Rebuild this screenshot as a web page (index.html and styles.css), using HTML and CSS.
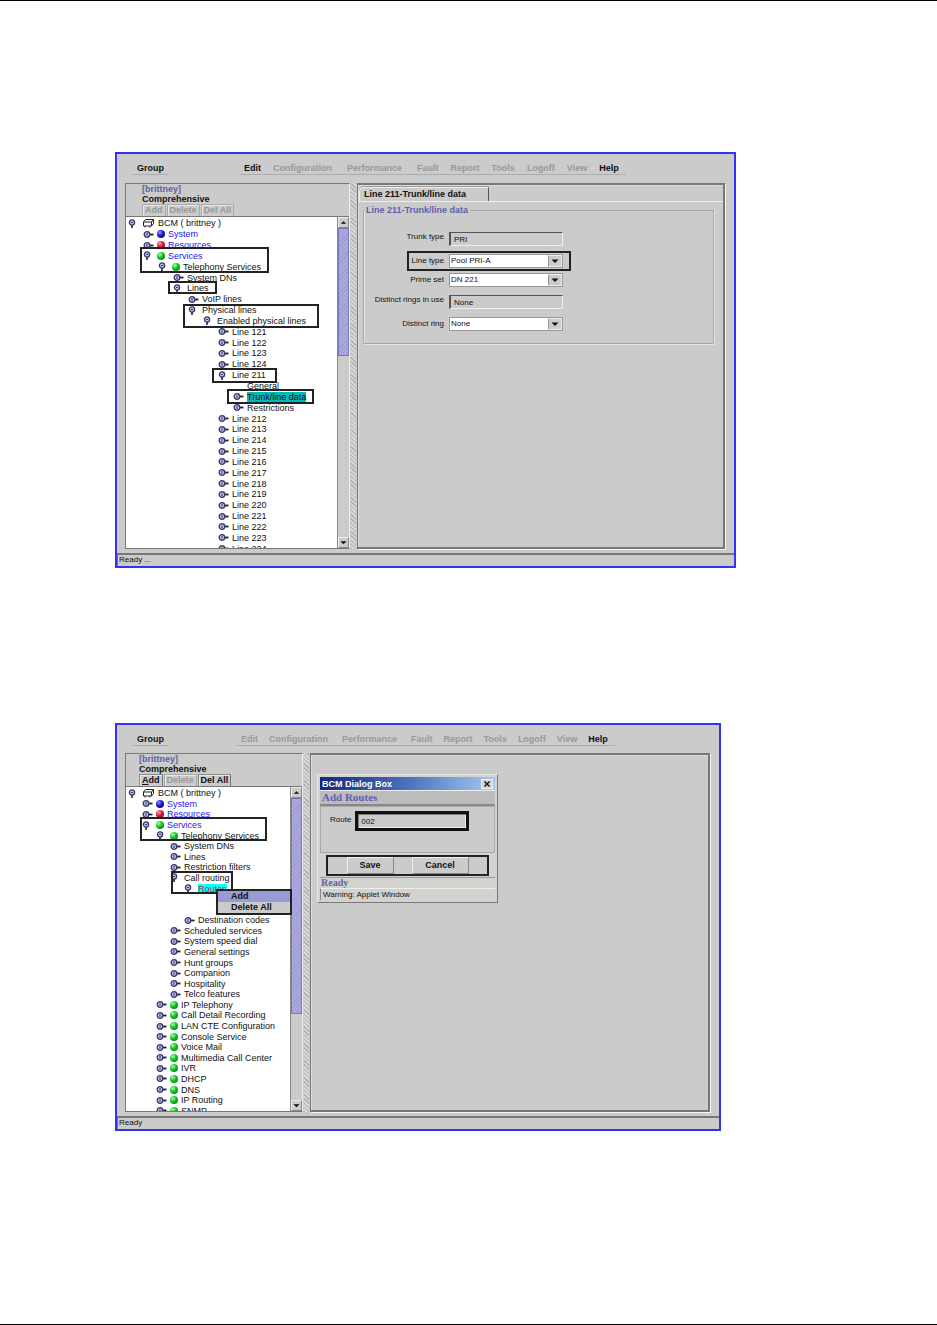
FILE: index.html
```html
<!DOCTYPE html>
<html lang="en">
<head>
<meta charset="utf-8">
<title>BCM Unified Manager</title>
<link rel="stylesheet" href="styles.css">
</head>
<body>
<svg class="defs" aria-hidden="true">
  <defs>
    <symbol id="shut" viewBox="0 0 11 9"><path d="M6 4.5h4.5" stroke="#222" stroke-width="1.8"/><circle cx="4" cy="4.5" r="2.8" fill="#c4c4ee" stroke="#35356b" stroke-width="1.3"/><path d="M4 3v3" stroke="#35356b"/></symbol>
    <symbol id="open" viewBox="0 0 11 9"><path d="M4 6v3" stroke="#222" stroke-width="1.6"/><circle cx="4" cy="3.5" r="2.6" fill="#c4c4ee" stroke="#35356b" stroke-width="1.3"/><path d="M3 3.5h2" stroke="#35356b"/></symbol>
    <symbol id="bcm" viewBox="0 0 12 10"><path d="M3.500 1.500h8v4l-2 2.500h-8V4zM1.500 4h8v4M9.500 4l2-2.500M3 8v1.500M8 8v1.500" fill="#fff" stroke="#222"/></symbol>
    <symbol id="up" viewBox="0 0 10 10"><path d="M2 6.500h6L5 3.500z" fill="#111"/></symbol>
    <symbol id="down" viewBox="0 0 10 10"><path d="M1.500 3.500h7L5 7z" fill="#111"/></symbol>
    <symbol id="close" viewBox="0 0 10 8"><path d="M2.500 1.500l5 5M7.500 1.500l-5 5" stroke="#111" stroke-width="1.400"/></symbol>
  </defs>
</svg>
<main class="page">

<section class="window" aria-label="Line 211 trunk/line data">
  <nav class="menubar">
    <div class="menu menu-group"><button>Group</button></div>
    <div class="menu menu-main">
      <button>Edit</button><button class="wide" disabled>Configuration</button><button class="wide" disabled>Performance</button><button disabled>Fault</button><button disabled>Report</button><button disabled>Tools</button><button disabled>Logoff</button><button disabled>View</button><button>Help</button>
    </div>
  </nav>
  <div class="work">
    <div class="side side-wide">
      <header class="side-head">
        <div class="host">[brittney]</div>
        <div class="mode">Comprehensive</div>
        <div class="tools"><button disabled>Add</button><button disabled>Delete</button><button disabled>Del All</button></div>
      </header>
      <div class="scroller scroller-tall">
        <div class="view">
          <ul class="tree">
            <li><button class="toggle" aria-label="Collapse"><svg><use href="#open"/></svg></button><svg class="bcm"><use href="#bcm"/></svg>BCM ( brittney )</li>
            <li class="d1 link"><button class="toggle" aria-label="Expand"><svg><use href="#shut"/></svg></button><i class="ball blue"></i>System</li>
            <li class="d1 link"><button class="toggle" aria-label="Expand"><svg><use href="#shut"/></svg></button><i class="ball red"></i>Resources</li>
            <li class="d1 link"><button class="toggle" aria-label="Collapse"><svg><use href="#open"/></svg></button><i class="ball"></i>Services</li>
            <li class="d2"><button class="toggle" aria-label="Collapse"><svg><use href="#open"/></svg></button><i class="ball"></i>Telephony Services</li>
            <li class="d3"><button class="toggle" aria-label="Expand"><svg><use href="#shut"/></svg></button>System DNs</li>
            <li class="d3"><button class="toggle" aria-label="Collapse"><svg><use href="#open"/></svg></button>Lines</li>
            <li class="d4"><button class="toggle" aria-label="Expand"><svg><use href="#shut"/></svg></button>VoIP lines</li>
            <li class="d4"><button class="toggle" aria-label="Collapse"><svg><use href="#open"/></svg></button>Physical lines</li>
            <li class="d5"><button class="toggle" aria-label="Collapse"><svg><use href="#open"/></svg></button>Enabled physical lines</li>
            <li class="d6"><button class="toggle" aria-label="Expand"><svg><use href="#shut"/></svg></button>Line 121</li>
            <li class="d6"><button class="toggle" aria-label="Expand"><svg><use href="#shut"/></svg></button>Line 122</li>
            <li class="d6"><button class="toggle" aria-label="Expand"><svg><use href="#shut"/></svg></button>Line 123</li>
            <li class="d6"><button class="toggle" aria-label="Expand"><svg><use href="#shut"/></svg></button>Line 124</li>
            <li class="d6"><button class="toggle" aria-label="Collapse"><svg><use href="#open"/></svg></button>Line 211</li>
            <li class="d7"><span class="toggle"></span>General</li>
            <li class="d7"><button class="toggle" aria-label="Expand"><svg><use href="#shut"/></svg></button><span class="picked">Trunk/line data</span></li>
            <li class="d7"><button class="toggle" aria-label="Expand"><svg><use href="#shut"/></svg></button>Restrictions</li>
            <li class="d6"><button class="toggle" aria-label="Expand"><svg><use href="#shut"/></svg></button>Line 212</li>
            <li class="d6"><button class="toggle" aria-label="Expand"><svg><use href="#shut"/></svg></button>Line 213</li>
            <li class="d6"><button class="toggle" aria-label="Expand"><svg><use href="#shut"/></svg></button>Line 214</li>
            <li class="d6"><button class="toggle" aria-label="Expand"><svg><use href="#shut"/></svg></button>Line 215</li>
            <li class="d6"><button class="toggle" aria-label="Expand"><svg><use href="#shut"/></svg></button>Line 216</li>
            <li class="d6"><button class="toggle" aria-label="Expand"><svg><use href="#shut"/></svg></button>Line 217</li>
            <li class="d6"><button class="toggle" aria-label="Expand"><svg><use href="#shut"/></svg></button>Line 218</li>
            <li class="d6"><button class="toggle" aria-label="Expand"><svg><use href="#shut"/></svg></button>Line 219</li>
            <li class="d6"><button class="toggle" aria-label="Expand"><svg><use href="#shut"/></svg></button>Line 220</li>
            <li class="d6"><button class="toggle" aria-label="Expand"><svg><use href="#shut"/></svg></button>Line 221</li>
            <li class="d6"><button class="toggle" aria-label="Expand"><svg><use href="#shut"/></svg></button>Line 222</li>
            <li class="d6"><button class="toggle" aria-label="Expand"><svg><use href="#shut"/></svg></button>Line 223</li>
            <li class="d6"><button class="toggle" aria-label="Expand"><svg><use href="#shut"/></svg></button>Line 224</li>
          </ul>
          <div class="mark mark-services"></div>
          <div class="mark mark-lines"></div>
          <div class="mark mark-physical"></div>
          <div class="mark mark-line211"></div>
          <div class="mark mark-trunk"></div>
        </div>
        <div class="bar"><button aria-label="Scroll up"><svg><use href="#up"/></svg></button><div class="thumb thumb-short"></div><div class="track"></div><button aria-label="Scroll down"><svg><use href="#down"/></svg></button></div>
      </div>
    </div>
    <div class="divider"></div>
    <div class="content">
      <div class="tabs"><button class="tab">Line 211-Trunk/line data</button></div>
      <fieldset class="group">
        <legend>Line 211-Trunk/line data</legend>
        <div class="field readout"><label for="trunk">Trunk type</label><input id="trunk" value="PRI" readonly></div>
        <div class="field spaced marked"><label for="ltype">Line type</label><span class="combo"><select id="ltype"><option>Pool PRI-A</option></select><svg><use href="#down"/></svg></span></div>
        <div class="field"><label for="prime">Prime set</label><span class="combo"><select id="prime"><option>DN 221</option></select><svg><use href="#down"/></svg></span></div>
        <div class="field spaced readout"><label for="rings">Distinct rings in use</label><input id="rings" value="None" readonly></div>
        <div class="field spaced"><label for="ring">Distinct ring</label><span class="combo"><select id="ring"><option>None</option></select><svg><use href="#down"/></svg></span></div>
      </fieldset>
    </div>
  </div>
  <footer class="status">Ready ...</footer>
</section>

<section class="window window-narrow" aria-label="Add routes">
  <nav class="menubar">
    <div class="menu menu-group"><button>Group</button></div>
    <div class="menu menu-main">
      <button disabled>Edit</button><button class="wide" disabled>Configuration</button><button class="wide" disabled>Performance</button><button disabled>Fault</button><button disabled>Report</button><button disabled>Tools</button><button disabled>Logoff</button><button disabled>View</button><button>Help</button>
    </div>
  </nav>
  <div class="work">
    <div class="side">
      <header class="side-head">
        <div class="host">[brittney]</div>
        <div class="mode">Comprehensive</div>
        <div class="tools"><button><u>A</u>dd</button><button disabled>Delete</button><button>Del All</button></div>
      </header>
      <div class="scroller">
        <div class="view">
          <ul class="tree">
            <li><button class="toggle" aria-label="Collapse"><svg><use href="#open"/></svg></button><svg class="bcm"><use href="#bcm"/></svg>BCM ( brittney )</li>
            <li class="d1 link"><button class="toggle" aria-label="Expand"><svg><use href="#shut"/></svg></button><i class="ball blue"></i>System</li>
            <li class="d1 link"><button class="toggle" aria-label="Expand"><svg><use href="#shut"/></svg></button><i class="ball red"></i>Resources</li>
            <li class="d1 link"><button class="toggle" aria-label="Collapse"><svg><use href="#open"/></svg></button><i class="ball"></i>Services</li>
            <li class="d2"><button class="toggle" aria-label="Collapse"><svg><use href="#open"/></svg></button><i class="ball"></i>Telephony Services</li>
            <li class="d3"><button class="toggle" aria-label="Expand"><svg><use href="#shut"/></svg></button>System DNs</li>
            <li class="d3"><button class="toggle" aria-label="Expand"><svg><use href="#shut"/></svg></button>Lines</li>
            <li class="d3"><button class="toggle" aria-label="Expand"><svg><use href="#shut"/></svg></button>Restriction filters</li>
            <li class="d3"><button class="toggle" aria-label="Collapse"><svg><use href="#open"/></svg></button>Call routing</li>
            <li class="d4"><button class="toggle" aria-label="Collapse"><svg><use href="#open"/></svg></button><span class="picked picked-red">Routes</span></li>
            <li class="d5"></li>
            <li class="d5"></li>
            <li class="d4"><button class="toggle" aria-label="Expand"><svg><use href="#shut"/></svg></button>Destination codes</li>
            <li class="d3"><button class="toggle" aria-label="Expand"><svg><use href="#shut"/></svg></button>Scheduled services</li>
            <li class="d3"><button class="toggle" aria-label="Expand"><svg><use href="#shut"/></svg></button>System speed dial</li>
            <li class="d3"><button class="toggle" aria-label="Expand"><svg><use href="#shut"/></svg></button>General settings</li>
            <li class="d3"><button class="toggle" aria-label="Expand"><svg><use href="#shut"/></svg></button>Hunt groups</li>
            <li class="d3"><button class="toggle" aria-label="Expand"><svg><use href="#shut"/></svg></button>Companion</li>
            <li class="d3"><button class="toggle" aria-label="Expand"><svg><use href="#shut"/></svg></button>Hospitality</li>
            <li class="d3"><button class="toggle" aria-label="Expand"><svg><use href="#shut"/></svg></button>Telco features</li>
            <li class="d2"><button class="toggle" aria-label="Expand"><svg><use href="#shut"/></svg></button><i class="ball"></i>IP Telephony</li>
            <li class="d2"><button class="toggle" aria-label="Expand"><svg><use href="#shut"/></svg></button><i class="ball"></i>Call Detail Recording</li>
            <li class="d2"><button class="toggle" aria-label="Expand"><svg><use href="#shut"/></svg></button><i class="ball"></i>LAN CTE Configuration</li>
            <li class="d2"><button class="toggle" aria-label="Expand"><svg><use href="#shut"/></svg></button><i class="ball"></i>Console Service</li>
            <li class="d2"><button class="toggle" aria-label="Expand"><svg><use href="#shut"/></svg></button><i class="ball"></i>Voice Mail</li>
            <li class="d2"><button class="toggle" aria-label="Expand"><svg><use href="#shut"/></svg></button><i class="ball"></i>Multimedia Call Center</li>
            <li class="d2"><button class="toggle" aria-label="Expand"><svg><use href="#shut"/></svg></button><i class="ball"></i>IVR</li>
            <li class="d2"><button class="toggle" aria-label="Expand"><svg><use href="#shut"/></svg></button><i class="ball"></i>DHCP</li>
            <li class="d2"><button class="toggle" aria-label="Expand"><svg><use href="#shut"/></svg></button><i class="ball"></i>DNS</li>
            <li class="d2"><button class="toggle" aria-label="Expand"><svg><use href="#shut"/></svg></button><i class="ball"></i>IP Routing</li>
            <li class="d2"><button class="toggle" aria-label="Expand"><svg><use href="#shut"/></svg></button><i class="ball"></i>SNMP</li>
          </ul>
          <div class="mark mark-services"></div>
          <div class="mark mark-routing"></div>
        </div>
        <div class="bar"><button aria-label="Scroll up"><svg><use href="#up"/></svg></button><div class="thumb"></div><div class="track"></div><button aria-label="Scroll down"><svg><use href="#down"/></svg></button></div>
        <div class="popup"><button class="active">Add</button><button>Delete All</button></div>
      </div>
    </div>
    <div class="divider"></div>
    <div class="content">
      <form class="dialog" aria-label="BCM Dialog Box">
        <div class="title">BCM Dialog Box<button type="button" aria-label="Close"><svg><use href="#close"/></svg></button></div>
        <div class="heading">Add Routes</div>
        <div class="entry"><label for="route">Route</label><input id="route" value="002"></div>
        <div class="actions"><button type="button">Save</button><button type="button">Cancel</button></div>
        <div class="state">Ready</div>
        <div class="warning">Warning: Applet Window</div>
      </form>
    </div>
  </div>
  <footer class="status">Ready</footer>
</section>

</main>
</body>
</html>
```
FILE: styles.css
```css
* { box-sizing: border-box; }

body {
  margin: 0;
  min-height: 100vh;
  border-top: 1px solid #000;
  border-bottom: 1px solid #000;
  background: #fff;
  color: #111;
  font: 9px/10px "Liberation Sans", Arial, sans-serif;
}

button, input, select {
  margin: 0;
  padding: 0;
  border: 0;
  border-radius: 0;
  background: none;
  color: inherit;
  font: inherit;
}

svg { display: block; }
.defs { position: absolute; width: 0; height: 0; }

.page {
  display: flex;
  flex-direction: column;
  gap: 155px;
  padding: 151px 201px 0 115px;
}

.window {
  display: flex;
  flex-direction: column;
  border: 2px solid #3333f0;
  background: #cacbca;
}
.window-narrow { margin-right: 15px; }

/* menu bar */
.menubar { display: flex; gap: 70px; padding: 8px 15px 8px; }
.menu {
  display: flex;
  gap: 12px;
  padding: 0 5px;
  border-bottom: 1px solid #adadad;
  font-weight: bold;
  line-height: 12px;
}
.menu-main { padding-right: 7px; }
.menu .wide { margin-right: 3px; }
.menu button:disabled { color: #999; }
.window-narrow .menubar { gap: 67px; padding-bottom: 7px; }
.window-narrow .menu { gap: 11px; }

/* left side */
.work { display: flex; }
.side {
  display: flex;
  flex-direction: column;
  width: 178px;
  margin-left: 8px;
  border: 1px solid #777;
  border-right-color: #eee;
}
.side-wide { width: 225px; }
.side-head { padding-left: 13px; font-weight: bold; }
.side-wide .side-head { padding-left: 16px; }
.host { color: #5f5fac; }
.tools { display: flex; gap: 1px; height: 12px; }
.tools button {
  padding: 0 2px;
  border: 1px solid #8c8c8c;
  border-right-color: #777;
  border-bottom: 0;
  box-shadow: inset 1px 1px #e8e8e8;
  font-weight: bold;
  line-height: 11px;
}
.tools button:disabled { color: #999; border-color: #aaa; }

.scroller { position: relative; display: flex; height: 325px; background: #fff; border-top: 1px solid #777; }
.scroller-tall { height: 332px; }
.view { position: relative; flex: 1; overflow: hidden; }
.tree {
  display: grid;
  grid-auto-rows: 1fr;
  height: 329px;
  margin: 0;
  padding: 1px 0 0 2px;
  list-style: none;
}
.scroller-tall .tree { height: 337px; }
.tree li { display: flex; align-items: center; min-height: 0; height: 100%; white-space: nowrap; }
.link { color: #1919f5; }
.window { --step: 15px; }
.window-narrow { --step: 14px; }
.d1 { padding-left: var(--step); }
.d2 { padding-left: calc(2 * var(--step)); }
.d3 { padding-left: calc(3 * var(--step)); }
.d4 { padding-left: calc(4 * var(--step)); }
.d5 { padding-left: calc(5 * var(--step)); }
.d6 { padding-left: calc(6 * var(--step)); }
.d7 { padding-left: calc(7 * var(--step)); }
.toggle { flex: none; width: 14px; }
.toggle svg { width: 11px; height: 9px; }
.bcm { width: 12px; height: 10px; margin-right: 4px; }
.ball {
  width: 8px;
  height: 8px;
  margin-right: 3px;
  border-radius: 50%;
  background: radial-gradient(circle at 35% 30%, #a8ffa8, #0fc01f 45%, #076010);
}
.ball.blue { background: radial-gradient(circle at 35% 30%, #8c8cff, #1818c8 45%, #000060); }
.ball.red { background: radial-gradient(circle at 35% 30%, #ff9cb0, #d8143c 45%, #70001c); }
.picked { background: #00b8b8; }
.picked-red { background: #1ff; color: #a33; }

/* outlines drawn over the tree */
.mark { position: absolute; border: 2px solid #222; }
.mark-services { left: 14px; top: 30px; width: 129px; height: 26px; }
.mark-lines { left: 42px; top: 64px; width: 49px; height: 13px; }
.mark-physical { left: 57px; top: 87px; width: 136px; height: 24px; }
.mark-line211 { left: 86px; top: 151px; width: 65px; height: 15px; }
.mark-trunk { left: 101px; top: 172px; width: 87px; height: 15px; }
.mark-routing { left: 45px; top: 84px; width: 62px; height: 23px; }
.window-narrow .mark-services { width: 127px; height: 24px; }

.bar { display: flex; flex-direction: column; width: 12px; border-left: 1px solid #888; background: #cacbca; }
.bar button { height: 11px; border: 1px solid #eee; border-right-color: #888; border-bottom-color: #888; }
.bar svg { width: 9px; height: 9px; }
.thumb {
  flex: 5 1 0;
  border: 1px solid #7777bb;
  background: repeating-linear-gradient(135deg, #9a9ad4 0 1px, #a9a9e0 1px 3px);
}
.track { flex: 2 1 0; }
.thumb-short { flex-grow: 7; }
.thumb-short + .track { flex-grow: 10; }

.popup {
  position: absolute;
  left: 90px;
  top: 102px;
  display: flex;
  flex-direction: column;
  width: 76px;
  border: 2px solid #222;
  background: #cacbca;
}
.popup button { padding-left: 13px; font-weight: bold; line-height: 11px; text-align: left; }
.popup .active { background: #9a9ad4; }

.divider {
  width: 5px;
  margin: 0 1px;
  background: repeating-linear-gradient(45deg, #b0b0b0 0 1px, #d6d6d6 1px 3px);
}

/* right side */
.content {
  position: relative;
  flex: 1;
  margin-right: 9px;
  border: 2px solid #777;
  border-left-width: 1px;
  box-shadow: 1px 1px #f4f4f4, inset 1px 1px #ddd;
}
.tabs { padding: 2px 2px 0 1px; border-bottom: 1px solid #eee; }
.tab {
  width: 130px;
  padding-left: 4px;
  border: 1px solid #eee;
  border-right-color: #555;
  border-bottom: 0;
  border-top-left-radius: 5px;
  box-shadow: 0 -1px #999;
  font-weight: bold;
  line-height: 13px;
  text-align: left;
}
.group {
  display: flex;
  flex-direction: column;
  gap: 5px;
  min-width: 0;
  margin: 3px 9px 0 5px;
  padding: 17px 0 12px;
  border: 1px solid #a8a8a8;
  box-shadow: inset 1px 0 #e4e4e4, 1px 1px #e4e4e4;
}
.group legend { padding: 0 2px; color: #5f5fac; font-weight: bold; }
.field {
  display: grid;
  grid-template-columns: 80px 114px;
  gap: 5px;
  align-items: center;
  font-size: 8px;
}
.readout { align-items: start; }
.field label { text-align: right; white-space: nowrap; }
.field input, .combo { height: 14px; }
.field input {
  min-width: 0;
  padding-left: 3px;
  border: 1px solid #eee;
  border-top-color: #555;
  border-left: 2px solid #555;
}
.combo { display: grid; grid-template-columns: 1fr 14px; border: 1px solid #999; background: #fff; }
.combo select { grid-area: 1 / 1 / 2 / 3; padding-left: 1px; appearance: none; outline: 0; }
.combo svg {
  grid-area: 1 / 2;
  width: 14px;
  height: 12px;
  border: 1px solid #eee;
  border-left-color: #999;
  background: #cacbca;
  pointer-events: none;
}
.marked { position: relative; }
.marked::after {
  content: "";
  position: absolute;
  left: 43px;
  top: -3px;
  width: 160px;
  height: 16px;
  border: 2px solid #222;
}
.spaced { margin-top: 3px; }

.status {
  height: 13px;
  margin-top: 4px;
  padding-left: 1px;
  border-top: 2px solid #777;
  border-left: 1px solid #777;
  font-size: 8px;
}

/* floating dialog */
.dialog {
  position: absolute;
  left: 6px;
  top: 19px;
  width: 181px;
  padding: 2px;
  border: 1px solid #e8e8e8;
  border-right-color: #777;
  border-bottom-color: #777;
  background: #d2d2ce;
}
.title {
  display: flex;
  justify-content: space-between;
  align-items: center;
  height: 13px;
  padding: 0 2px;
  background: linear-gradient(90deg, #12287c, #4a72bc 50%, #a8c8f0);
  color: #fff;
  font-size: 9px;
  font-weight: bold;
}
.title button { border: 1px solid #eee; background: #d2d2ce; }
.title button svg { width: 10px; height: 8px; }
.heading {
  padding-left: 2px;
  border-top: 1px solid #eee;
  border-bottom: 2px solid #888;
  background: #bcbcbc;
  color: #5f5fac;
  font: bold 11px/13px "Liberation Serif", serif;
}
.entry {
  display: flex;
  gap: 4px;
  height: 47px;
  padding: 4px 9px;
  border: 1px solid #aaa;
  background: #cacbca;
  font-size: 8px;
  line-height: 18px;
}
.entry input {
  width: 114px;
  height: 20px;
  padding-left: 3px;
  border: 3px solid #111;
  box-shadow: inset 1px 1px #777, inset -1px -1px #eee;
}
.actions {
  display: flex;
  justify-content: center;
  gap: 18px;
  margin: 2px 6px 1px;
  border: 2px solid #222;
  background: #cacbca;
}
.actions button {
  width: 47px;
  border: 1px solid #eee;
  border-right-color: #888;
  border-bottom-color: #888;
  font-weight: bold;
  line-height: 15px;
}
.actions button + button { width: 57px; }
.state {
  padding-left: 1px;
  border-top: 1px solid #999;
  color: #5f5fac;
  font: bold 10px/10px "Liberation Serif", serif;
}
.warning {
  padding-left: 2px;
  border-top: 1px solid #eee;
  border-left: 1px solid #888;
  font-size: 8px;
  line-height: 11px;
}
```
